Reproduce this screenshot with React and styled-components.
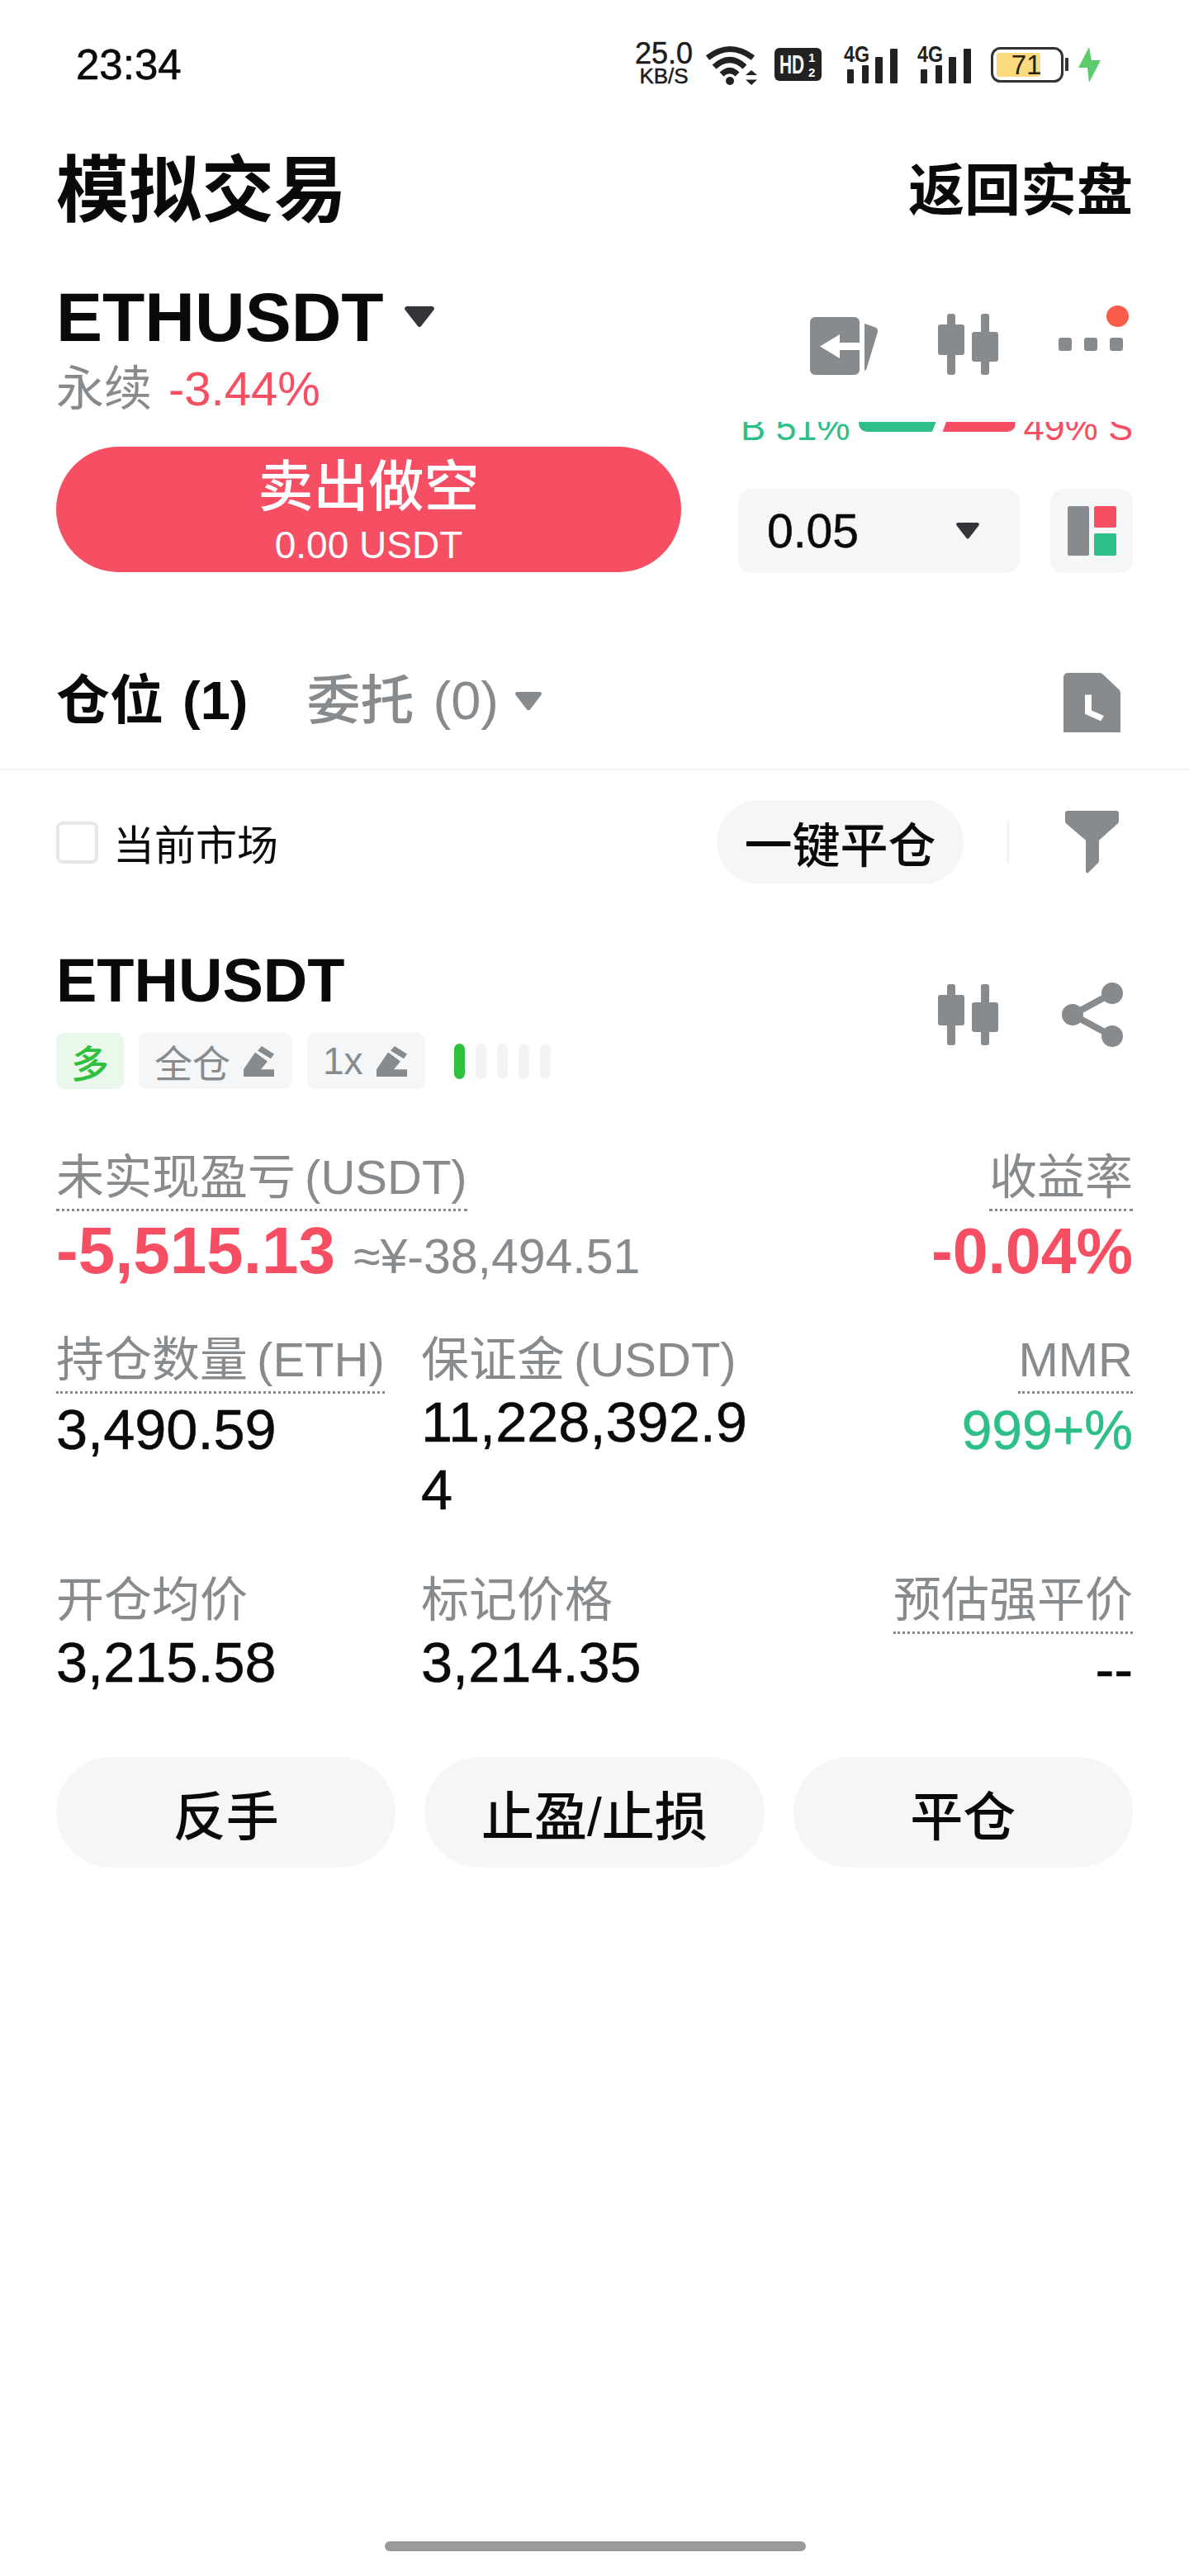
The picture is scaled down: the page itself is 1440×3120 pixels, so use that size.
import React from "react"
import styled, { createGlobalStyle } from "styled-components"

const GRAY = "#888b8e"
const RED = "#f64e63"
const GREEN = "#2dbf87"
const SOFT = "#f4f6f7"
const INK = "#0a0a0a"
const SANS = `"Liberation Sans", "Noto Sans CJK SC", sans-serif`

const Global = createGlobalStyle`
  html, body { margin: 0; padding: 0; background: #fff; }
  body { font-family: ${SANS}; color: ${INK}; }
  * { box-sizing: border-box; }
`

const Screen = styled.div`
  width: 1440px;
  height: 3120px;
  background: #fff;
  position: relative;
  overflow: hidden;
`

const StatusBar = styled.div`
  height: 185px;
  padding: 50px 107px 0 92px;
  display: flex;
  justify-content: space-between;
  align-items: flex-start;
`
const Clock = styled.div`
  font-size: 51px;
  line-height: 58px;
  -webkit-text-stroke: 0.6px ${INK};
`
const StatusIcons = styled.div`
  display: flex;
  align-items: center;
  height: 56px;
`
const Speed = styled.div`
  width: 70px;
  text-align: center;
  color: #1c1c1c;
  font-size: 36px;
  line-height: 28px;
  -webkit-text-stroke: 0.5px #1c1c1c;
  span {
    display: block;
    font-size: 26px;
    line-height: 26px;
  }
`
const StatusGlyph = styled.svg`
  margin-left: ${(p) => p.$gap}px;
  flex: none;
  overflow: visible;
`

const Header = styled.div`
  height: 92px;
  padding: 0 68px;
  display: flex;
  justify-content: space-between;
  align-items: center;
`
const PageTitle = styled.div`
  font-size: 88px;
  line-height: 92px;
  font-weight: 700;
`
const BackLink = styled.div`
  font-size: 68px;
  line-height: 76px;
  font-weight: 700;
`

const Market = styled.div`
  display: flex;
  justify-content: space-between;
  padding: 65px 68px 0;
`
const MarketLeft = styled.div`
  width: 757px;
`
const Symbol = styled.div`
  display: flex;
  align-items: center;
  gap: 25px;
  font-size: 84px;
  line-height: 84px;
  font-weight: 700;
`
const Change = styled.div`
  display: flex;
  gap: 20px;
  margin-top: 11px;
  font-size: 58px;
  line-height: 68px;
  color: ${GRAY};
  b {
    font-weight: 400;
    color: ${RED};
  }
`
const ToolIcons = styled.div`
  display: flex;
  align-items: center;
  gap: 73px;
  margin-top: 38px;
  padding-right: 12px;
  height: 74px;
  position: relative;
`
const Dot = styled.span`
  position: absolute;
  right: 5px;
  top: -10px;
  width: 27px;
  height: 26px;
  border-radius: 50%;
  background: #fa5c4b;
`

const OrderRow = styled.div`
  display: flex;
  justify-content: space-between;
  padding: 0 68px;
`
const SellButton = styled.div`
  width: 757px;
  height: 152px;
  margin-top: 36px;
  border-radius: 76px;
  background: ${RED};
  color: #fff;
  text-align: center;
  padding-top: 11px;
  font-size: 67px;
  line-height: 76px;
  font-weight: 500;
  span {
    display: block;
    margin-top: 7px;
    font-size: 46px;
    line-height: 50px;
    font-weight: 400;
  }
`
const DepthColumn = styled.div`
  width: 478px;
`
const Depth = styled.div`
  height: 22px;
  margin-top: 6px;
  padding-left: 3px;
  overflow: hidden;
  display: flex;
  align-items: flex-end;
  font-size: 45px;
  line-height: 44px;
`
const DepthLabel = styled.span`
  color: ${(p) => p.$color};
  white-space: nowrap;
  margin-bottom: -7px;
`
const DepthBar = styled.span`
  flex: none;
  width: ${(p) => p.$width}px;
  height: 12px;
  margin: 0 ${(p) => p.$right}px 0 ${(p) => p.$left}px;
  align-self: flex-start;
  background: ${(p) => p.$color};
  clip-path: ${(p) => p.$clip};
  border-radius: ${(p) => p.$radius};
`
const DepthControls = styled.div`
  display: flex;
  justify-content: space-between;
  margin-top: 59px;
`
const PriceStep = styled.div`
  width: 341px;
  height: 102px;
  border-radius: 16px;
  background: ${SOFT};
  display: flex;
  align-items: center;
  justify-content: space-between;
  padding: 0 49px 0 35px;
  font-size: 57px;
  -webkit-text-stroke: 0.5px ${INK};
`
const LayoutButton = styled.div`
  width: 100px;
  height: 102px;
  border-radius: 16px;
  background: ${SOFT};
  display: flex;
  align-items: center;
  justify-content: center;
`

const Tabs = styled.div`
  height: 239px;
  padding: 73px 68px 0;
  display: flex;
  align-items: center;
  justify-content: space-between;
  border-bottom: 2px solid #f0f1f2;
`
const TabGroup = styled.div`
  display: flex;
  align-items: center;
  gap: 71px;
`
const Tab = styled.div`
  display: flex;
  align-items: center;
  gap: 20px;
  font-size: 65px;
  line-height: 80px;
  word-spacing: 5px;
  font-weight: ${(p) => (p.$active ? 700 : 500)};
  color: ${(p) => (p.$active ? INK : GRAY)};
`
const HistoryIcon = styled.svg`
  margin: 4px 15px 0 0;
`

const FilterBar = styled.div`
  height: 174px;
  padding: 0 68px;
  display: flex;
  align-items: center;
  justify-content: space-between;
`
const CheckLabel = styled.div`
  display: flex;
  align-items: center;
  gap: 18px;
  font-size: 50px;
`
const Check = styled.span`
  width: 51px;
  height: 51px;
  border: 4px solid #e6e7e8;
  border-radius: 8px;
`
const FilterRight = styled.div`
  display: flex;
  align-items: center;
  padding-right: 17px;
`
const Pill = styled.div`
  width: 299px;
  height: 102px;
  border-radius: 51px;
  background: ${SOFT};
  display: flex;
  align-items: center;
  justify-content: center;
  font-size: 58px;
  font-weight: 500;
`
const Rule = styled.span`
  width: 2px;
  height: 52px;
  background: #eef0f1;
  margin: 0 68px 0 53px;
`

const Position = styled.div`
  padding: 43px 68px 0;
`
const PositionHead = styled.div`
  display: flex;
  justify-content: space-between;
  align-items: flex-start;
`
const PositionSymbol = styled.div`
  font-size: 74px;
  line-height: 76px;
  font-weight: 700;
`
const TagRow = styled.div`
  display: flex;
  align-items: center;
  gap: 18px;
  margin-top: 25px;
`
const Tag = styled.div`
  height: 68px;
  padding: 0 ${(p) => (p.$long ? 18 : 22)}px 0 ${(p) => (p.$long ? 18 : 19)}px;
  border-radius: 10px;
  display: flex;
  align-items: center;
  gap: 16px;
  font-size: 46px;
  font-weight: ${(p) => (p.$long ? 500 : 400)};
  background: ${(p) => (p.$long ? "#e9f8ea" : SOFT)};
  color: ${(p) => (p.$long ? "#2fc13d" : GRAY)};
`
const Leverage = styled.div`
  display: flex;
  gap: 13px;
  margin-left: 17px;
`
const LeverageBar = styled.span`
  width: 13px;
  height: 43px;
  border-radius: 7px;
  background: ${(p) => (p.$on ? "#2fc13d" : "#f1f3f4")};
`
const HeadIcons = styled.div`
  display: flex;
  align-items: center;
  gap: 77px;
  margin-top: 40px;
  padding-right: 12px;
`

const Stats = styled.div`
  display: grid;
  grid-template-columns: 442px 1fr auto;
  margin-top: 72px;
`
const Cell = styled.div`
  text-align: ${(p) => (p.$right ? "right" : "left")};
  margin-bottom: ${(p) => p.$gap || 0}px;
`
const WideCell = styled(Cell)`
  grid-column: span 2;
`
const Label = styled.div`
  width: fit-content;
  margin-left: ${(p) => (p.$right ? "auto" : 0)};
  font-size: 58px;
  line-height: 70px;
  color: ${GRAY};
  word-spacing: -5px;
  white-space: nowrap;
  ${(p) => p.$dotted && `
    padding-bottom: 3px;
    border-bottom: 3px dotted ${GRAY};
    margin-bottom: 3px;
  `}
`
const Value = styled.div`
  font-size: ${(p) => p.$size || 68.5}px;
  line-height: 82px;
  color: ${(p) => p.$color || INK};
  -webkit-text-stroke: 0.5px ${(p) => p.$color || INK};
  max-width: 420px;
  word-break: break-all;
  margin-left: ${(p) => (p.$right ? "auto" : 0)};
`
const BigValue = styled.div`
  display: flex;
  align-items: baseline;
  justify-content: ${(p) => (p.$right ? "flex-end" : "flex-start")};
  gap: 22px;
  font-size: ${(p) => p.$size}px;
  line-height: 90px;
  font-weight: 700;
  color: ${RED};
  white-space: nowrap;
  span {
    font-size: 59px;
    line-height: 60px;
    font-weight: 400;
    color: ${GRAY};
  }
`

const Actions = styled.div`
  display: grid;
  grid-template-columns: repeat(3, 1fr);
  gap: 35px;
  margin-top: 64px;
`
const Action = styled.div`
  height: 134px;
  border-radius: 67px;
  background: ${SOFT};
  display: flex;
  align-items: center;
  justify-content: center;
  font-size: 64px;
  font-weight: 500;
`
const HomeBar = styled.div`
  position: absolute;
  left: 466px;
  bottom: 30px;
  width: 510px;
  height: 12px;
  border-radius: 6px;
  background: #9a9a9a;
`

const Triangle = ({ size = 36, color = "#333538" }) => (
  <svg width={size} height={size * 0.7} viewBox="0 0 40 28">
    <path d="M3 0h34a3 3 0 0 1 2.4 4.6L22.500 26.500a3 3 0 0 1-5 0L.6 4.6A3 3 0 0 1 3 0z" fill={color} />
  </svg>
)

const Candles = () => (
  <svg width="73" height="74" viewBox="0 0 73 74" fill={GRAY}>
    <rect x="11" y="0" width="10" height="74" rx="3" />
    <rect x="0" y="13" width="32" height="37" rx="3" />
    <rect x="52" y="0" width="10" height="74" rx="3" />
    <rect x="41" y="22" width="32" height="36" rx="3" />
  </svg>
)

const Pencil = () => (
  <svg width="37" height="37" viewBox="0 0 37 34" preserveAspectRatio="none" fill={GRAY}>
    <path d="M22 0l15 9-4 5-16-9zM14 7l15 10-8 9h16v8H0v-8z" />
  </svg>
)

const Wifi = ({ gap }) => (
  <StatusGlyph $gap={gap} width="62" height="50" viewBox="0 0 62 50" fill="none" stroke="#222">
    <path d="M2 17Q29-4 57 17M10 28Q29 11 47 28M19 37Q29 28 38 37" strokeWidth="7" />
    <circle cx="29" cy="45" r="5" fill="#222" stroke="none" />
    <path d="M48 38l7-6 7 6zM48 43.500l7 6.500 7-6.500z" fill="#222" stroke="none" />
  </StatusGlyph>
)

const Signal = ({ gap }) => (
  <StatusGlyph $gap={gap} width="66" height="47" viewBox="0 0 66 47" fill="#222">
    <text x="0" y="20" fontSize="27" fontWeight="700" fontFamily="Liberation Sans" textLength="31" lengthAdjust="spacingAndGlyphs">4G</text>
    <rect x="4" y="29" width="8" height="17" rx="1" />
    <rect x="22" y="24" width="8" height="22" rx="1" />
    <rect x="38" y="14" width="9" height="32" rx="1" />
    <rect x="56" y="4" width="9" height="42" rx="1" />
  </StatusGlyph>
)

const Battery = ({ gap }) => (
  <StatusGlyph $gap={gap} width="94" height="43" viewBox="0 0 94 43">
    <rect x="1.500" y="1.500" width="85" height="40" rx="10" fill="#fff" stroke="#333" strokeWidth="3" />
    <rect x="7" y="7" width="53" height="29" rx="3" fill="#fbd97f" />
    <rect x="90" y="13" width="4" height="16" rx="1" fill="#333" />
    <text x="43" y="33" textAnchor="middle" fontSize="33" fontFamily="Liberation Sans" fill="#2a2010">71</text>
  </StatusGlyph>
)

const stats = [
  { label: "持仓数量 (ETH)", dotted: true, value: "3,490.59" },
  { label: "保证金 (USDT)", value: "11,228,392.94" },
  { label: "MMR", dotted: true, value: "999+%", color: GREEN, right: true, size: 66 },
  { label: "开仓均价", value: "3,215.58" },
  { label: "标记价格", value: "3,214.35" },
  { label: "预估强平价", dotted: true, value: "--", right: true },
]

export default function App() {
  return (
    <Screen>
      <Global />
      <StatusBar>
        <Clock>23:34</Clock>
        <StatusIcons>
          <Speed>
            25.0
            <span>KB/S</span>
          </Speed>
          <Wifi gap={16} />
          <StatusGlyph $gap={21} width="57" height="40" viewBox="0 0 57 40">
            <rect width="57" height="40" rx="6" fill="#222" />
            <text x="6" y="31" fontSize="32" fontWeight="700" fontFamily="Liberation Sans" fill="#fff" textLength="30" lengthAdjust="spacingAndGlyphs">HD</text>
            <text x="41" y="17" fontSize="15" fontWeight="700" fontFamily="Liberation Sans" fill="#fff">1</text>
            <text x="41" y="35" fontSize="15" fontWeight="700" fontFamily="Liberation Sans" fill="#fff">2</text>
          </StatusGlyph>
          <Signal gap={27} />
          <Signal gap={23} />
          <Battery gap={23} />
          <StatusGlyph $gap={12} width="27" height="43" viewBox="0 0 27 43">
            <path d="M13 0L0 25h11l2 18 14-27H16z" fill="#5ccb6b" />
          </StatusGlyph>
        </StatusIcons>
      </StatusBar>

      <Header>
        <PageTitle>模拟交易</PageTitle>
        <BackLink>返回实盘</BackLink>
      </Header>

      <Market>
        <MarketLeft>
          <Symbol>
            ETHUSDT
            <Triangle />
          </Symbol>
          <Change>
            永续
            <b>-3.44%</b>
          </Change>
        </MarketLeft>
        <ToolIcons>
          <svg width="82" height="74" viewBox="0 -4 82 74" fill={GRAY}>
            <path d="M6 0h48a6 6 0 0 1 6 6v25H36V21L12 35.500 36 50V40h24v24a6 6 0 0 1-6 6H6a6 6 0 0 1-6-6V6a6 6 0 0 1 6-6z" />
            <path d="M66 8l12 4a5 5 0 0 1 4 6L68 64l-2 1z" />
          </svg>
          <Candles />
          <svg width="78" height="16" viewBox="0 0 78 16" fill={GRAY}>
            <rect x="0" y="0" width="16" height="16" rx="3" />
            <rect x="31" y="0" width="16" height="16" rx="3" />
            <rect x="62" y="0" width="16" height="16" rx="3" />
          </svg>
          <Dot />
        </ToolIcons>
      </Market>

      <OrderRow>
        <SellButton>
          卖出做空
          <span>0.00 USDT</span>
        </SellButton>
        <DepthColumn>
          <Depth>
            <DepthLabel $color={GREEN}>B 51%</DepthLabel>
            <DepthBar
              $color={GREEN}
              $width={94}
              $left={10}
              $right={8}
              $radius="0 0 0 10px"
              $clip="polygon(0 0, 100% 0, 95% 100%, 0 100%)"
            />
            <DepthBar
              $color={RED}
              $width={88}
              $left={0}
              $right={10}
              $radius="0 0 10px 0"
              $clip="polygon(5% 0, 100% 0, 100% 100%, 0 100%)"
            />
            <DepthLabel $color={RED}>49% S</DepthLabel>
          </Depth>
          <DepthControls>
            <PriceStep>
              0.05
              <Triangle size={28} />
            </PriceStep>
            <LayoutButton>
              <svg width="59" height="60" viewBox="0 0 59 60">
                <rect x="0" y="0" width="26" height="60" rx="2" fill={GRAY} />
                <rect x="32" y="0" width="27" height="26" rx="2" fill={RED} />
                <rect x="32" y="33" width="27" height="27" rx="2" fill={GREEN} />
              </svg>
            </LayoutButton>
          </DepthControls>
        </DepthColumn>
      </OrderRow>

      <Tabs>
        <TabGroup>
          <Tab $active>仓位 (1)</Tab>
          <Tab>
            委托 (0)
            <Triangle size={32} color={GRAY} />
          </Tab>
        </TabGroup>
        <HistoryIcon width="69" height="72" viewBox="0 0 69 68" preserveAspectRatio="none">
          <path d="M5 0h39a5 5 0 0 1 4 2l19 17a5 5 0 0 1 2 4v45H0V5a5 5 0 0 1 5-5z" fill={GRAY} />
          <path d="M26 25h8v18l15 6-4 6-19-8z" fill="#fff" />
        </HistoryIcon>
      </Tabs>

      <FilterBar>
        <CheckLabel>
          <Check />
          当前市场
        </CheckLabel>
        <FilterRight>
          <Pill>一键平仓</Pill>
          <Rule />
          <svg width="65" height="76" viewBox="0 0 65 70" preserveAspectRatio="none" fill={GRAY}>
            <path d="M3 0h59a3 3 0 0 1 3 3v8a5 5 0 0 1-1 3L41 33v23a4 4 0 0 1-2 3L28 69a2 2 0 0 1-3-1V33L1 14a5 5 0 0 1-1-3V3a3 3 0 0 1 3-3z" />
          </svg>
        </FilterRight>
      </FilterBar>

      <Position>
        <PositionHead>
          <div>
            <PositionSymbol>ETHUSDT</PositionSymbol>
            <TagRow>
              <Tag $long>多</Tag>
              <Tag>
                全仓
                <Pencil />
              </Tag>
              <Tag>
                1x
                <Pencil />
              </Tag>
              <Leverage>
                {[1, 0, 0, 0, 0].map((on, i) => (
                  <LeverageBar key={i} $on={on} />
                ))}
              </Leverage>
            </TagRow>
          </div>
          <HeadIcons>
            <Candles />
            <svg width="74" height="78" viewBox="0 0 74 78" fill={GRAY}>
              <circle cx="13" cy="39" r="13" />
              <circle cx="61" cy="13" r="13" />
              <circle cx="61" cy="65" r="13" />
              <path d="M13 39L61 13M13 39l48 26" stroke={GRAY} strokeWidth="8" />
            </svg>
          </HeadIcons>
        </PositionHead>

        <Stats>
          <WideCell $gap={52}>
            <Label $dotted>未实现盈亏 (USDT)</Label>
            <BigValue $size={80}>
              -5,515.13
              <span>≈¥-38,494.51</span>
            </BigValue>
          </WideCell>
          <Cell $right $gap={52}>
            <Label $dotted $right>收益率</Label>
            <BigValue $right $size={77}>-0.04%</BigValue>
          </Cell>
          {stats.map((s, i) => (
            <Cell key={s.label} $right={s.right} $gap={i < 3 ? 57 : 0}>
              <Label $dotted={s.dotted} $right={s.right}>{s.label}</Label>
              <Value $color={s.color} $right={s.right} $size={s.size}>
                {s.value}
              </Value>
            </Cell>
          ))}
        </Stats>

        <Actions>
          <Action>反手</Action>
          <Action>止盈/止损</Action>
          <Action>平仓</Action>
        </Actions>
      </Position>

      <HomeBar />
    </Screen>
  )
}
